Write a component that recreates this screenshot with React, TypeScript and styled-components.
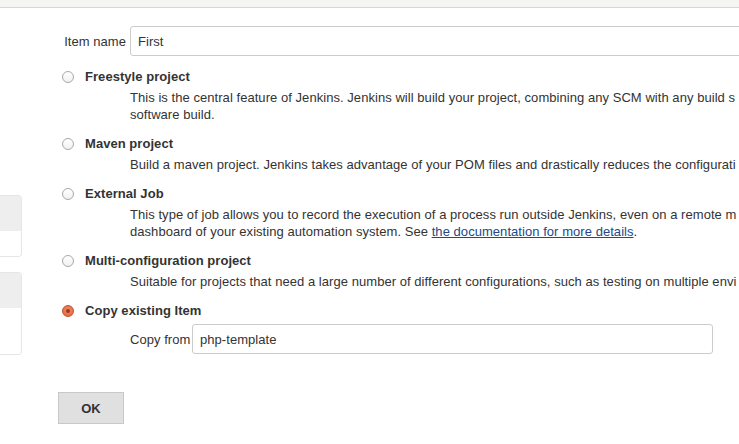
import styled, { createGlobalStyle } from "styled-components";

const GlobalStyle = createGlobalStyle`
  body {
    margin: 0;
    background: #fff;
    font-family: "Liberation Sans", Arial, Helvetica, sans-serif;
    font-size: 13px;
    letter-spacing: 0.05px;
    color: #333;
  }
`;

const TopBar = styled.div`
  height: 7px;
  background: #f5f6f1;
  border-bottom: 1px solid #d8d8d4;
`;

const Page = styled.div`
  display: flex;
  overflow: hidden;
  width: 739px;
  height: 436px;
`;

const Sidebar = styled.div`
  width: 22px;
  flex-shrink: 0;
  padding-top: 187px;
  display: flex;
  flex-direction: column;
  gap: 15px;
`;

const SidePanel = styled.div<{ $body: number }>`
  border: 1px solid #e6e6e6;
  border-left: none;
  border-radius: 0 4px 4px 0;
  overflow: hidden;
  .head {
    height: 35px;
    background: #eeeeee;
  }
  .body {
    height: ${(p) => p.$body}px;
    background: #fff;
  }
`;

const Main = styled.div`
  flex: 1;
  padding: 18px 0 0 36px;
  min-width: 0;
  overflow: hidden;
`;

const FieldRow = styled.div`
  display: flex;
  align-items: center;
  gap: 4px;
`;

const Label = styled.label<{ $width: number; $align: string }>`
  width: ${(p) => p.$width}px;
  text-align: ${(p) => p.$align};
  white-space: nowrap;
  flex-shrink: 0;
`;

const TextInput = styled.input<{ $width: string }>`
  width: ${(p) => p.$width};
  flex-shrink: 0;
  height: 30px;
  box-sizing: border-box;
  border: 1px solid #cccccc;
  border-radius: 3px;
  padding: 0 7px;
  font-family: inherit;
  font-size: 13px;
  letter-spacing: 0.05px;
  color: #333;
  background: #fff;
  outline: none;
`;

const Options = styled.div`
  margin-top: 12px;
`;

const Option = styled.div`
  margin-bottom: 12px;
`;

const OptionHead = styled.label`
  display: flex;
  align-items: center;
  height: 17px;
  font-weight: bold;
  gap: 11px;
  padding-left: 4px;
`;

const Radio = styled.span<{ $checked?: boolean }>`
  width: 12px;
  height: 12px;
  box-sizing: border-box;
  border-radius: 50%;
  position: relative;
  flex-shrink: 0;
  border: 1px solid ${(p) => (p.$checked ? "#c3532f" : "#a8a8a8")};
  background: ${(p) =>
    p.$checked
      ? "radial-gradient(circle at 50% 40%, #f08a66, #e0643c)"
      : "linear-gradient(#ffffff, #f1f1f1)"};
  &::after {
    content: "";
    display: ${(p) => (p.$checked ? "block" : "none")};
    position: absolute;
    left: 3px;
    top: 3px;
    width: 4px;
    height: 4px;
    border-radius: 50%;
    background: #9e3a1c;
  }
`;

const Desc = styled.div`
  margin: 4px 0 0 72px;
  line-height: 17px;
  white-space: nowrap;
  a {
    color: #204a87;
    text-decoration: underline;
  }
`;

const CopyRow = styled(FieldRow)`
  margin: -7px 0 0 72px;
`;

const Button = styled.button`
  margin-top: 38px;
  width: 66px;
  height: 32px;
  border: 1px solid #c8c8c8;
  background: #e0e0e0;
  border-radius: 0;
  font-family: inherit;
  font-size: 13px;
  font-weight: bold;
  color: #333;
`;

export default function App() {
  return (
    <>
      <GlobalStyle />
      <TopBar />
      <Page>
        <Sidebar>
          <SidePanel $body={25}>
            <div className="head" />
            <div className="body" />
          </SidePanel>
          <SidePanel $body={46}>
            <div className="head" />
            <div className="body" />
          </SidePanel>
        </Sidebar>
        <Main>
          <FieldRow>
            <Label $width={68} $align="right">
              Item name
            </Label>
            <TextInput $width="700px" defaultValue="First" />
          </FieldRow>
          <Options>
            <Option>
              <OptionHead>
                <Radio />
                Freestyle project
              </OptionHead>
              <Desc>
                This is the central feature of Jenkins. Jenkins will build your
                project, combining any SCM with any build s
                <br />
                software build.
              </Desc>
            </Option>
            <Option>
              <OptionHead>
                <Radio />
                Maven project
              </OptionHead>
              <Desc>
                Build a maven project. Jenkins takes advantage of your POM
                files and drastically reduces the configurati
              </Desc>
            </Option>
            <Option>
              <OptionHead>
                <Radio />
                External Job
              </OptionHead>
              <Desc>
                This type of job allows you to record the execution of a
                process run outside Jenkins, even on a remote m
                <br />
                dashboard of your existing automation system. See{" "}
                <a href="#">the documentation for more details</a>.
              </Desc>
            </Option>
            <Option>
              <OptionHead>
                <Radio />
                Multi-configuration project
              </OptionHead>
              <Desc>
                Suitable for projects that need a large number of different
                configurations, such as testing on multiple envi
              </Desc>
            </Option>
            <Option>
              <OptionHead>
                <Radio $checked />
                Copy existing Item
              </OptionHead>
            </Option>
          </Options>
          <CopyRow>
            <Label $width={58} $align="left">
              Copy from
            </Label>
            <TextInput $width="521px" defaultValue="php-template" />
          </CopyRow>
          <Button>OK</Button>
        </Main>
      </Page>
    </>
  );
}
